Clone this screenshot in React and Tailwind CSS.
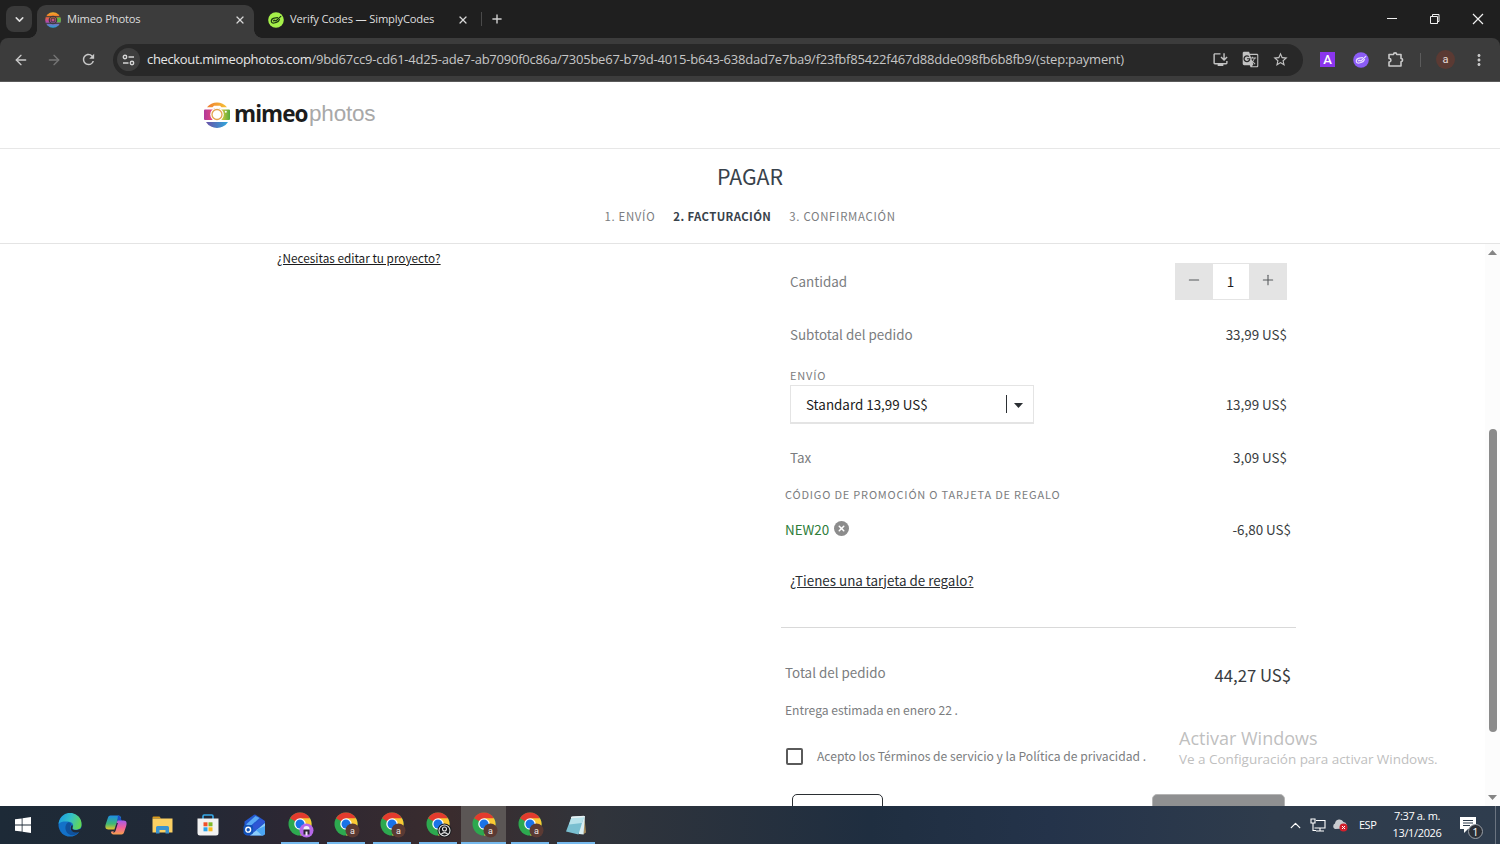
import { useState } from "react";
import {
  ArrowLeft,
  ArrowRight,
  ChevronDown,
  ChevronUp,
  Minus,
  Plus,
  X,
} from "lucide-react";
import {
  MdInstallDesktop,
  MdGTranslate,
  MdStarBorder,
  MdMoreVert,
  MdRefresh,
} from "react-icons/md";

const MimeoFavicon = () => (
  <svg width="16" height="16" viewBox="0 0 16 16">
    <defs>
      <linearGradient id="fav" x1="0" y1="0" x2="0" y2="1">
        <stop offset="0" stopColor="#f5b52a" />
        <stop offset="0.3" stopColor="#ee6c2c" />
        <stop offset="0.6" stopColor="#b546a8" />
        <stop offset="1" stopColor="#1ea8dc" />
      </linearGradient>
    </defs>
    <circle cx="8" cy="8" r="7.8" fill="url(#fav)" />
    <path d="M12 5.500h3.500a8 8 0 0 1 0 5H12z" fill="#5fb548" />
    <path d="M1 4.700h14M1 11.300h14" stroke="#3c3c3c" strokeWidth="1" />
    <circle cx="8" cy="8" r="3.7" fill="none" stroke="#3c3c3c" strokeWidth="1.3" />
    <circle cx="8" cy="8" r="2" fill="none" stroke="#3c3c3c" strokeWidth="1" />
  </svg>
);

const CodesIcon = ({ bg, color }) => (
  <svg width="16" height="16" viewBox="0 0 16 16">
    <circle cx="8" cy="8" r="7.8" fill={bg} />
    <g fill="none" stroke={color} strokeWidth="1.2" strokeLinecap="round" strokeLinejoin="round">
      <path d="M9.500 5.600L6.200 6.200C4.600 6.600 3.200 7.800 3.300 9.300c.1 1.400 1.400 2 2.700 1.700l2.300-.6c1.600-.5 2.700-1.500 3.200-2.900" />
      <path d="M6.200 8.400l1.700.6L12.800 4.400" />
      <path d="M5.500 8.900l1.500-.6" />
    </g>
  </svg>
);

const Logo = () => (
  <div className="flex items-center">
    <svg width="28" height="28" viewBox="0 0 28 28">
      <defs>
        <linearGradient id="lgTop" x1="0" x2="1">
          <stop offset="0" stopColor="#ee7d33" />
          <stop offset="1" stopColor="#f6c336" />
        </linearGradient>
        <linearGradient id="lgMid" x1="0" x2="1">
          <stop offset="0" stopColor="#b03a9c" />
          <stop offset="0.3" stopColor="#e0457e" />
          <stop offset="0.7" stopColor="#c9c63c" />
          <stop offset="1" stopColor="#52ab3f" />
        </linearGradient>
        <linearGradient id="lgBot" x1="0" x2="1">
          <stop offset="0" stopColor="#6a52a8" />
          <stop offset="1" stopColor="#2ea8dc" />
        </linearGradient>
      </defs>
      <path d="M4 6.300a12.800 12.800 0 0 1 20 0h-5.500l-1.500-1.500h-6L9.500 6.300z" fill="url(#lgTop)" />
      <path d="M2 8.500h8L11.500 7h5L18 8.500h8q1 0 1 1V18q0 1-1 1H2q-1 0-1-1V9.500q0-1 1-1z" fill="url(#lgMid)" />
      <path d="M3 20.900h22a13 13 0 0 1-22 0z" fill="url(#lgBot)" />
      <circle cx="14" cy="13.5" r="6.8" fill="#fff" />
      <circle cx="14" cy="13.5" r="5" fill="none" stroke="#e2a34c" strokeWidth="1.3" />
      <circle cx="22.8" cy="10.7" r="1" fill="#fff" />
    </svg>
    <span className="ml-[3px] flex h-[28px] w-[75px] items-center pb-[2px] font-['Open_Sans'] text-[22.5px] leading-none font-bold tracking-[-0.95px] text-[#1c1c1c]">
      mimeo
    </span>
    <span className="flex h-[28px] items-center pb-[2px] font-['Liberation_Sans'] text-[22.5px] leading-none tracking-[-0.2px] text-[#a8a8a8]">
      photos
    </span>
  </div>
);

const Tab = ({ icon, title, active }) => (
  <div
    className={
      active
        ? "relative mt-[5px] flex h-[33px] w-[217px] items-center rounded-t-[9px] bg-[#3c3c3c] pr-[8px] pb-[4px] pl-[8px]"
        : "mt-[5px] flex h-[33px] w-[227px] items-center pr-[12px] pb-[4px] pl-[14px]"
    }
  >
    {active && (
      <>
        <div className="absolute bottom-0 -left-[8px] h-[8px] w-[8px] bg-[radial-gradient(circle_at_0_0,#1f1f1f_7.5px,#3c3c3c_8px)]" />
        <div className="absolute -right-[8px] bottom-0 h-[8px] w-[8px] bg-[radial-gradient(circle_at_100%_0,#1f1f1f_7.5px,#3c3c3c_8px)]" />
      </>
    )}
    {icon}
    <span className="ml-[6px] flex-1 font-['Open_Sans'] text-[11.2px] tracking-[-0.17px] whitespace-nowrap text-[#dedede]">
      {title}
    </span>
    <X size={12} strokeWidth={2.4} color="#d8d8d8" />
  </div>
);

const TabStrip = () => (
  <div className="flex h-[38px] bg-[#1f1f1f] pl-[6px]">
    <button className="mt-[6px] mr-[5px] flex h-[26px] w-[26px] items-center justify-center rounded-[8px] bg-[#3a3a3a]">
      <ChevronDown size={13} strokeWidth={2.8} color="#dedede" />
    </button>
    <Tab active icon={<MimeoFavicon />} title="Mimeo Photos" />
    <Tab icon={<CodesIcon bg="#a5f04a" color="#1d3a12" />} title="Verify Codes — SimplyCodes" />
    <div className="mt-[12px] h-[14px] w-px bg-[#4a4a4a]" />
    <Plus className="mt-[12px] ml-[8px]" size={14} strokeWidth={2.4} color="#d0d0d0" />
    <div className="mt-[13px] ml-auto flex gap-[32px] pr-[16px]">
      <svg width="12" height="12" viewBox="0 0 12 12" stroke="#f0f0f0">
        <path d="M2 5.500h10" />
      </svg>
      <svg width="11" height="12" viewBox="0 0 11 12" fill="none" stroke="#f0f0f0">
        <path d="M1.500 3.500h7v7h-7zM3.500 3.500v-2h6.500v7H8.500" />
      </svg>
      <svg width="12" height="12" viewBox="0 0 12 12" stroke="#f0f0f0" strokeWidth="1.2">
        <path d="M1 1l10 10M11 1L1 11" />
      </svg>
    </div>
  </div>
);

const Toolbar = () => (
  <div className="h-[44px] bg-[#1f1f1f]">
    <div className="flex h-full items-center rounded-t-[8px] border-b border-[#5a5a5a] bg-[#3c3c3c]">
      <ArrowLeft className="ml-[13px]" size={16} strokeWidth={2} color="#c9c9c9" />
      <ArrowRight className="ml-[17px]" size={16} strokeWidth={2} color="#757575" />
      <MdRefresh className="ml-[18px]" size={17} color="#c9c9c9" />
      <div className="ml-[16px] flex h-[32px] w-[1190px] items-center rounded-full bg-[#282828] pr-[14px] pl-[4px]">
        <div className="flex h-[23px] w-[23px] items-center justify-center rounded-full bg-[#3e3e3e]">
          <svg width="13" height="12" viewBox="0 0 13 12" fill="none" stroke="#d6d6d6" strokeWidth="1.4">
            <circle cx="3" cy="3" r="1.7" />
            <path d="M6.500 3h5.500M1 9h5.500" />
            <circle cx="10" cy="9" r="1.7" />
          </svg>
        </div>
        <span className="ml-[7px] flex-1 font-['Open_Sans'] text-[13px] tracking-[-0.222px] whitespace-nowrap text-[#c6c6c6]">
          <span className="tracking-[-0.35px] text-[#e6e6e6]">checkout.mimeophotos.com</span>
          /9bd67cc9-cd61-4d25-ade7-ab7090f0c86a/7305be67-b79d-4015-b643-638dad7e7ba9/f23fbf85422f467d88dde098fb6b8fb9/(step:payment)
        </span>
        <MdInstallDesktop size={17} color="#c2c2c2" />
        <MdGTranslate className="ml-[13px]" size={17} color="#c2c2c2" />
        <MdStarBorder className="ml-[13px]" size={17} color="#c2c2c2" />
      </div>
      <div className="ml-[17px] flex h-[15px] w-[15px] items-center justify-center bg-[#8b35ee] font-['Roboto'] text-[13px] leading-none font-medium text-white">
        A
      </div>
      <div className="ml-[18px]">
        <CodesIcon bg="#8b5cf6" color="#e8deff" />
      </div>
      {/* extensions puzzle piece */}
      <svg className="ml-[18px]" width="18" height="17" viewBox="0 0 18 17" fill="none" stroke="#c9c9c9" strokeWidth="1.6" strokeLinejoin="round">
        <path d="M2 3.500h4.500a1.600 1.600 0 0 1 3.200 0H14v4a1.600 1.600 0 0 1 0 3.200v4.300H2v-4c2.600-.4 2.600-3.200 0-3.600z" />
      </svg>
      <div className="ml-[15px] h-[14px] w-px bg-[#5c5c5c]" />
      <div className="ml-[15px] flex h-[19px] w-[19px] items-center justify-center rounded-full bg-[#5b3a33] font-['Roboto'] text-[11px] leading-none text-[#e5dcd9]">
        a
      </div>
      <MdMoreVert className="ml-[15px]" size={18} color="#c9c9c9" />
    </div>
  </div>
);

const steps = ["1. Envío", "2. Facturación", "3. Confirmación"];

const Row = ({ className, label, children }) => (
  <div className={`flex items-center justify-between px-[9px] ${className}`}>
    <span className="text-[#7b7d80]">{label}</span>
    {children}
  </div>
);

const OrderSummary = () => {
  const [quantity, setQuantity] = useState(1);
  const [accepted, setAccepted] = useState(false);

  return (
    <div className="w-[515px] text-[13.4px] leading-[20px] text-[#383c40]">
      <div className="mt-[19px] flex h-[37px] justify-between px-[9px]">
        <span className="pt-[8px] text-[#7b7d80]">Cantidad</span>
        <div className="flex h-[37px] w-[112px] bg-[#e4e4e4] text-[#55585b]">
          <button
            className="flex w-[38px] items-center justify-center pr-px pb-[4px]"
            onClick={() => setQuantity(Math.max(1, quantity - 1))}
          >
            <Minus size={16} strokeWidth={1.6} />
          </button>
          <span className="my-px flex w-[36px] items-center justify-center bg-white pr-px pb-[2px] text-[#1b1b1b]">
            {quantity}
          </span>
          <button
            className="flex w-[38px] items-center justify-center pb-[4px]"
            onClick={() => setQuantity(quantity + 1)}
          >
            <Plus size={16} strokeWidth={1.6} />
          </button>
        </div>
      </div>
      <Row className="mt-[24px] h-[20px]" label="Subtotal del pedido">
        <span>33,99 US$</span>
      </Row>
      <div className="mt-[24px] px-[9px] text-[11px] leading-[14px] tracking-[0.8px] text-[#7b7d80]">
        ENVÍO
      </div>
      <div className="mt-[3px] flex h-[39px] justify-between px-[9px]">
        <div className="flex h-[39px] w-[244px] items-center justify-between border border-b-2 border-[#e4e4e4] pr-[10px] pl-[15px] text-[#1b1b1b]">
          <span>Standard 13,99 US$</span>
          <span className="flex items-center">
            <span className="mr-[7px] h-[18px] w-px bg-[#2b2f33]" />
            <svg className="mt-[2px]" width="9" height="5" viewBox="0 0 9 5" fill="#2b2f33">
              <path d="M0 0h9L4.500 5z" />
            </svg>
          </span>
        </div>
        <span className="pt-[9px]">13,99 US$</span>
      </div>
      <Row className="mt-[23px] h-[20px]" label="Tax">
        <span>3,09 US$</span>
      </Row>
      <div className="mt-[20px] pl-[4px] text-[11px] leading-[14px] tracking-[0.8px] text-[#7b7d80]">
        CÓDIGO DE PROMOCIÓN O TARJETA DE REGALO
      </div>
      <div className="mt-[18px] flex h-[20px] items-center pr-[5px] pl-[4px]">
        <span className="text-[#2e7d3a]">NEW20</span>
        <span className="mb-px ml-[5px] flex h-[15px] w-[15px] items-center justify-center rounded-full bg-[#8c8c8c]">
          <X size={9} strokeWidth={4} color="#fff" />
        </span>
        <span className="ml-auto">-6,80 US$</span>
      </div>
      <a className="mt-[31px] block pl-[9px] text-[#2b2f33] underline underline-offset-1">
        ¿Tienes una tarjeta de regalo?
      </a>
      <div className="mt-[37px] h-px bg-[#d9d9d9]" />
      <div className="mt-[34px] flex h-[20px] justify-between pr-[5px] pl-[4px]">
        <span className="text-[#7b7d80]">Total del pedido</span>
        <span className="pt-[3px] text-[16.7px]">44,27 US$</span>
      </div>
      <div className="mt-[18px] pl-[4px] text-[12.1px] text-[#7b7d80]">
        Entrega estimada en enero 22 .
      </div>
      <label className="mt-[26px] flex h-[20px] items-center pl-[5px] text-[12.1px] text-[#7b7d80]">
        <input
          type="checkbox"
          checked={accepted}
          onChange={() => setAccepted(!accepted)}
          className="h-[17px] w-[17px] appearance-none rounded-[2px] border-2 border-[#5a5a5a] bg-white"
        />
        <span className="ml-[14px]">
          Acepto los Términos de servicio y la Política de privacidad .
        </span>
      </label>
      <div className="mt-[28px] flex justify-between px-[11px]">
        <button className="h-[37px] w-[91px] rounded-[5px] border border-[#2b2f33] bg-white" />
        <button className="h-[37px] w-[133px] rounded-[5px] border border-[#b5b5b5] bg-[#8f9091]" />
      </div>
    </div>
  );
};

const Checkout = () => (
  <div className="relative flex h-[724px] flex-col overflow-hidden bg-white font-['Noto_Sans_CJK_SC',sans-serif]">
    <header className="flex h-[67px] shrink-0 items-center border-b border-[#e7e7e7] pl-[203px]">
      <Logo />
    </header>
    <div className="flex h-[95px] shrink-0 flex-col items-center border-b border-[#e4e4e4]">
      <h1 className="mt-[12px] text-[21.3px] leading-[30px] text-[#38424b]">PAGAR</h1>
      <div className="mt-[15px] flex gap-[18px] text-[11.4px] leading-[20px] uppercase">
        {steps.map((step, i) => (
          <span
            key={step}
            className={
              i === 1
                ? "font-bold tracking-[0.38px] text-[#38424b]"
                : "tracking-[0.7px] text-[#7b7d80]"
            }
          >
            {step}
          </span>
        ))}
      </div>
    </div>
    <div className="flex flex-1 overflow-hidden">
      <div className="w-[781px] shrink-0 pt-[4px] pl-[277px]">
        <a className="block text-[11.75px] leading-[20px] text-[#1b1b1b] underline underline-offset-1">
          ¿Necesitas editar tu proyecto?
        </a>
      </div>
      <OrderSummary />
      <div className="ml-auto flex w-[15px] flex-col items-center bg-[#fcfcfc] pt-[6px] pb-[6px]">
        <svg width="9" height="5" viewBox="0 0 9 5" fill="#858585">
          <path d="M0 5h9L4.500 0z" />
        </svg>
        <div className="mt-[174px] h-[303px] w-[8px] rounded-full bg-[#8b8b8b]" />
        <svg className="mt-auto" width="9" height="5" viewBox="0 0 9 5" fill="#858585">
          <path d="M0 0h9L4.500 5z" />
        </svg>
      </div>
    </div>
    {/* windows watermark floats over the page */}
    <div className="absolute top-[643px] left-[1179px] font-['Open_Sans'] whitespace-nowrap text-[#bfbfbf]">
      <div className="pt-px text-[18px] leading-[24px]">Activar Windows</div>
      <div className="text-[13.5px] leading-[18px] tracking-[-0.04px]">
        Ve a Configuración para activar Windows.
      </div>
    </div>
  </div>
);

const ChromeIcon = ({ badge }) => (
  <svg className="ml-[2px]" width="26" height="26" viewBox="0 0 26 26">
    <circle cx="12" cy="12" r="11.5" fill="#2da94f" />
    <path d="M12 12L2.040 6.250A11.500 11.500 0 0 1 21.960 6.250z" fill="#e33b2e" />
    <path d="M12 6.250h9.960A11.500 11.500 0 0 1 12 23.500L17 14.900z" fill="#fcc934" />
    <circle cx="12" cy="12" r="5.75" fill="#fff" />
    <circle cx="12" cy="12" r="4.5" fill="#1a73e8" />
    {badge === "a" && (
      <>
        <circle cx="18.5" cy="18.5" r="7" fill="#5b3a33" />
        <text x="18.5" y="21.5" textAnchor="middle" fontSize="9" fontFamily="Roboto" fill="#f1e9e6">
          a
        </text>
      </>
    )}
    {badge === "ghost" && (
      <>
        <circle cx="18.5" cy="18.5" r="7" fill="#b668e8" />
        <path d="M15.500 18v-1a3 3 0 0 1 6 0v1z" fill="#f4eefa" />
        <path d="M15.500 17.500h6v5h-6z" fill="#2a2433" />
        <path d="M17.500 19.500h2v4h-2z" fill="#f4eefa" />
      </>
    )}
    {badge === "user" && (
      <>
        <circle cx="18.5" cy="18.5" r="7" fill="#17191c" />
        <g fill="none" stroke="#e6e6e6" strokeWidth="1.1">
          <circle cx="18.5" cy="18.5" r="5.5" />
          <circle cx="18.5" cy="17" r="2" />
          <path d="M15 22.300q3.500-3.500 7 0" />
        </g>
      </>
    )}
  </svg>
);

const EdgeIcon = () => (
  <svg width="24" height="24" viewBox="0 0 24 24">
    <defs>
      <linearGradient id="edgeTop" x1="0" x2="1" y1="0.3" y2="0.6">
        <stop offset="0" stopColor="#1b9de2" />
        <stop offset="0.5" stopColor="#35c1c4" />
        <stop offset="1" stopColor="#66d94f" />
      </linearGradient>
    </defs>
    <circle cx="12" cy="12" r="11.5" fill="#1371c8" />
    <path d="M.7 11A11.400 11.400 0 0 1 23.500 11.500c.2 3.500-2.500 5.300-5.500 5.300-2.500 0-4-1-3.500-2.200 1.500-2 .5-5.600-3.500-5.900C6.500 8.400 2.500 8.500.7 11z" fill="url(#edgeTop)" />
    <path d="M10 9.500c-3.500 2-3.500 8.500.5 11.500 3.500 2.300 7.500 1.500 11-2.500-5 2-10-.5-9.500-4 0-1.500 1-2 1-3.300C12.700 10 11.500 9 10 9.500z" fill="#10519c" />
    <path d="M14.500 14.800c-.7 1.500 1.500 2.400 3.500 2.300 1.700 0 3.500-.6 5.500-1.800v3.500l-2 .3c-4 1.300-9-.2-8.800-4.100 0-1.500 1-2 1.200-3.200.9.700 1.100 2 .6 3z" fill="#1f2a38" />
  </svg>
);

const CopilotIcon = () => (
  <svg width="22" height="20" viewBox="0 0 22 20">
    <defs>
      <linearGradient id="cpA" x1="0" y1="0" x2="0" y2="1">
        <stop offset="0" stopColor="#1c8de8" />
        <stop offset="0.6" stopColor="#3fb873" />
        <stop offset="1" stopColor="#e8c52c" />
      </linearGradient>
      <linearGradient id="cpB" x1="0" y1="0" x2="0" y2="1">
        <stop offset="0" stopColor="#a65ce8" />
        <stop offset="0.5" stopColor="#f0609c" />
        <stop offset="1" stopColor="#f7a04c" />
      </linearGradient>
    </defs>
    <path d="M5.500.5h8c1.500 0 2.200 1 2.700 2.800L13 4 9.500 14.500H3.500C0 14.500 0 11.500.8 9L3 2.500C3.400 1.200 4.200.5 5.500.5z" fill="url(#cpA)" />
    <path d="M13 .5c1.800 0 2.500 1.200 3.200 4l1 2h-5z" fill="#1b50c8" />
    <path d="M16.500 19.500h-8c-1.500 0-2.200-1-2.700-2.800L9 16l3.500-10.500h6c3.500 0 3.500 3 2.700 5.500L19 17.500c-.4 1.300-1.200 2-2.500 2z" fill="url(#cpB)" />
    <path d="M9.500 14.500l2.200-6.500h1.200L10.500 16q-.8 1.800-2.500 1.500z" fill="#1f2937" />
  </svg>
);

const FolderIcon = () => (
  <svg width="21" height="18" viewBox="0 0 21 18">
    <path d="M.5 1.500q0-1 1-1h6l1.500 2h-8.500z" fill="#d99a1c" />
    <path d="M.5 2.500h20v14H.5z" fill="#fbd063" />
    <path d="M4 17.500v-6q0-1.500 1.500-1.500h10q1.500 0 1.500 1.500v6h-3.500V14h-6v3.500z" fill="#3b93cf" />
  </svg>
);

const StoreIcon = () => (
  <svg width="22" height="22" viewBox="0 0 22 22">
    <path d="M6 5V2.200Q6 1 7.200 1h7.600Q16 1 16 2.200V5" fill="none" stroke="#36a9e8" strokeWidth="1.6" />
    <path d="M.5 4.500h21V19q0 2.500-2.500 2.500H3Q.5 21.500.5 19z" fill="#f2f2f2" />
    <path d="M6.500 8.300h4v4h-4z" fill="#f0512a" />
    <path d="M11.500 8.300h4v4h-4z" fill="#7fb928" />
    <path d="M6.500 13.300h4v4h-4z" fill="#2aa3ea" />
    <path d="M11.500 13.300h4v4h-4z" fill="#fbb91c" />
  </svg>
);

const OutlookIcon = () => (
  <svg width="23" height="22" viewBox="0 0 23 22">
    <path d="M1.500 7.500L11 .8q.8-.5 1.600 0L22 7v11.500q0 3-3 3H4.500q-3 0-3-3z" fill="#2458cf" />
    <path d="M3 10.500L12.500 2l4 2-9 8z" fill="#5aa9f5" />
    <path d="M9 12l9-7 4 2.500-9.500 8z" fill="#2f55d4" />
    <path d="M22 8v10.500q0 3-3 3H7L22 9z" fill="#8accfa" />
    <path d="M22 12v6.500q0 3-3 3L13 16z" fill="#4aa5f3" />
    <rect x=".5" y="11" width="9.5" height="9.5" rx="2" fill="#1152b8" />
    <circle cx="5.2" cy="15.7" r="2.4" fill="none" stroke="#fff" strokeWidth="1.4" />
  </svg>
);

const NotepadIcon = () => (
  <svg width="22" height="21" viewBox="0 0 22 21">
    <path d="M19.500 2.500l1.500 15-3 2z" fill="#a68b5b" />
    <path d="M7 1.500L20 1l-1.500 18.500-4.500-.5z" fill="#d9eef2" />
    <path d="M6.500 2L19 1.500 13.500 19.500 1 16.500z" fill="#79bfd0" />
    <path d="M6.500 2L19 1.500 17 8 4 9.500z" fill="#b8e2ea" />
    <path d="M6 2.500L19 1.500" stroke="#e8f0f2" strokeWidth="1.3" />
  </svg>
);

const WindowsLogo = () => (
  <svg width="16" height="16" viewBox="0 0 16 16" fill="#fff">
    <path d="M0 2.300L6.700 1.400v6.200H0zM7.500 1.300L16 0v7.600H7.500zM0 8.400h6.700v6.200L0 13.700zM7.500 8.400H16V16l-8.500-1.300z" />
  </svg>
);

const apps = [
  { icon: <EdgeIcon /> },
  { icon: <CopilotIcon /> },
  { icon: <FolderIcon /> },
  { icon: <StoreIcon /> },
  { icon: <OutlookIcon /> },
  { icon: <ChromeIcon badge="ghost" />, open: true },
  { icon: <ChromeIcon badge="a" />, open: true },
  { icon: <ChromeIcon badge="a" />, open: true },
  { icon: <ChromeIcon badge="user" />, open: true },
  { icon: <ChromeIcon badge="a" />, open: true, active: true },
  { icon: <ChromeIcon badge="a" />, open: true },
  { icon: <NotepadIcon />, open: true },
];

const Taskbar = () => (
  <div className="flex h-[38px] bg-[linear-gradient(90deg,#1d2a37_0%,#212936_12%,#2c2733_19%,#3a2c2e_30%,#30343b_40%,#1f2e40_58%,#24334a_70%,#2f3c4c_85%,#2f3d4e_100%)] font-['Open_Sans'] text-white">
    <div className="flex w-[47px] items-center pl-[15px]">
      <WindowsLogo />
    </div>
    {apps.map((app, i) => (
      <div
        key={i}
        className={
          app.active
            ? "flex w-[45px] flex-col items-center bg-[#5b5655] mr-px"
            : "flex w-[46px] flex-col items-center"
        }
      >
        <div className="flex h-[36px] items-center pt-[2px]">{app.icon}</div>
        {app.open && (
          <div className={app.active ? "h-[2px] w-full bg-[#76b9ed]" : "h-[2px] w-[38px] bg-[#76b9ed]"} />
        )}
      </div>
    ))}
    <div className="ml-auto flex items-center">
      <ChevronUp size={17} strokeWidth={1.8} />
      <svg className="ml-[6px]" width="16" height="14" viewBox="0 0 16 14" fill="none" stroke="#fff" strokeWidth="1.1">
        <path d="M6 2.500h9v7.500H4.500M10 10v2.500M6 13h8" />
        <path d="M1 1h4v4H1zM3 5v7.500h3" />
      </svg>
      <svg className="ml-[6px]" width="16" height="14" viewBox="0 0 16 14">
        <path d="M3 11a3 3 0 0 1 0-5.500A4.500 4.500 0 0 1 11.500 4 3.500 3.500 0 0 1 13 10.500z" fill="#c9ccd0" />
        <circle cx="11.5" cy="9.5" r="4" fill="#d3202c" />
        <path d="M10 8l3 3M13 8l-3 3" stroke="#fff" strokeWidth="1" />
      </svg>
      <span className="ml-[11px] w-[19px] text-[11px] tracking-[-0.5px]">ESP</span>
      <div className="ml-[12px] w-[54px] pb-[2px] text-center text-[11px] leading-[17px] tracking-[-0.35px] whitespace-nowrap">
        <div>7:37 a. m.</div>
        <div>13/1/2026</div>
      </div>
      <div className="relative ml-[16px] h-[17px] w-[35px]">
        <svg width="17" height="16" viewBox="0 0 17 16">
          <path d="M0 0h16v12H8l-4 4v-4H0z" fill="#fff" />
          <path d="M3 3.500h10M3 6h10M3 8.500h7" stroke="#2f3d4e" />
        </svg>
        <span className="absolute top-[7px] left-[8px] flex h-[15px] w-[15px] items-center justify-center rounded-full border border-[#9aa0a8] bg-[#2b2f36] text-[11px] leading-none">
          1
        </span>
      </div>
      <div className="h-[38px] w-px bg-[#6b7480]" />
      <div className="w-[4px]" />
    </div>
  </div>
);

const App = () => {
  return (
    <div className="h-[844px] w-[1500px] overflow-hidden bg-white">
      <TabStrip />
      <Toolbar />
      <Checkout />
      <Taskbar />
    </div>
  );
};

export default App;
